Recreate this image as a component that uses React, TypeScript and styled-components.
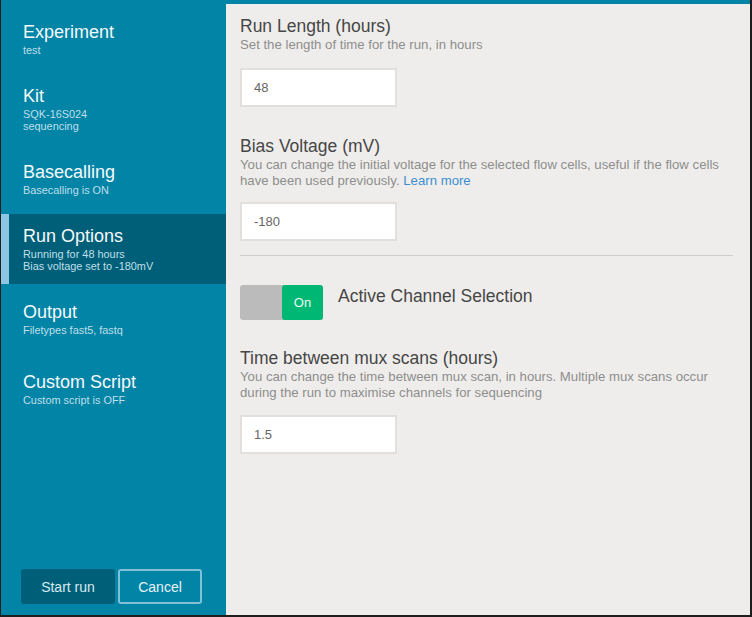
import React from "react";
import styled, { createGlobalStyle } from "styled-components";

const Global = createGlobalStyle`
  html, body { margin: 0; padding: 0; background: #1e1e1e; }
  body { font-family: "Liberation Sans", Arial, sans-serif; }
  * { box-sizing: border-box; }
`;

const Frame = styled.div`
  width: 752px;
  height: 617px;
  padding: 0 2px 2px 1px;
  background: #1e1e1e;
`;

const Shell = styled.div`
  display: grid;
  grid-template-columns: 225px 1fr;
  height: 100%;
  background: #0284a6;
`;

const Sidebar = styled.nav`
  display: flex;
  flex-direction: column;
  padding: 10px 0 11px 0;
  background: #0284a6;
`;

const NavList = styled.div`
  display: flex;
  flex-direction: column;
  gap: 6px;
  flex: 1;
`;

const NavItem = styled.div<{ $active?: boolean; $offset?: number }>`
  margin-top: ${(p) => p.$offset ?? 0}px;
  padding: 11px 8px 12px ${(p) => (p.$active ? "14px" : "22px")};
  background: ${(p) => (p.$active ? "#005f78" : "transparent")};
  border-left: ${(p) => (p.$active ? "8px solid #8cc6e4" : "none")};
  color: #f2f8fa;
`;

const NavTitle = styled.div`
  font-size: 18px;
  line-height: 23px;
  color: #f4f9fb;
`;

const NavSub = styled.div`
  font-size: 10.9px;
  line-height: 12px;
  color: #bfdfe9;
`;

const ButtonRow = styled.div`
  display: flex;
  gap: 3px;
  padding-left: 20px;
`;

const StartButton = styled.button`
  width: 94px;
  height: 35px;
  border: none;
  border-radius: 3px;
  background: #005f78;
  color: #d6eaf0;
  font-family: "Liberation Sans", Arial, sans-serif;
  font-size: 14px;
`;

const CancelButton = styled.button`
  width: 84px;
  height: 35px;
  border: 2px solid #80c1d6;
  border-radius: 3px;
  background: transparent;
  color: #e4f2f6;
  font-family: "Liberation Sans", Arial, sans-serif;
  font-size: 14px;
`;

const Content = styled.main`
  margin-top: 4px;
  background: #efedeb;
  padding: 12px 17px 0 14px;
  display: flex;
  flex-direction: column;
`;

const Section = styled.section<{ $gap?: number }>`
  display: flex;
  flex-direction: column;
  margin-bottom: ${(p) => p.$gap ?? 0}px;
`;

const Title = styled.div`
  font-size: 17.5px;
  line-height: 21px;
  color: #464646;
`;

const Desc = styled.div`
  font-size: 13.2px;
  line-height: 16.5px;
  color: #8d8d8d;
`;

const Link = styled.a`
  color: #3b8fd1;
  text-decoration: none;
`;

const Input = styled.input<{ $top?: number }>`
  margin-top: ${(p) => p.$top ?? 14}px;
  width: 157px;
  height: 39px;
  border: 2px solid #e2dfdc;
  background: #ffffff;
  padding: 0 12px;
  font-family: "Liberation Sans", Arial, sans-serif;
  font-size: 13px;
  color: #666666;
  outline: none;
`;

const Divider = styled.hr`
  margin: 14px 0 0 0;
  border: none;
  border-top: 1px solid #cfcdcb;
  height: 0;
`;

const ToggleRow = styled.div`
  display: flex;
  align-items: flex-start;
  gap: 15px;
  margin-top: 29px;
  margin-bottom: 28px;
`;

const Toggle = styled.div`
  display: flex;
  width: 83px;
  height: 35px;
  border-radius: 3px;
  background: #bbbbbb;
  justify-content: flex-end;
`;

const Knob = styled.div`
  width: 41px;
  height: 35px;
  border-radius: 3px;
  background: #00b874;
  color: #e9fbf3;
  font-size: 13px;
  display: flex;
  align-items: center;
  justify-content: center;
`;

const ToggleLabel = styled.div`
  font-size: 17.5px;
  line-height: 21px;
  margin-top: 1px;
  color: #464646;
`;

const navItems = [
  { title: "Experiment", subs: ["test"] },
  { title: "Kit", subs: ["SQK-16S024", "sequencing"] },
  { title: "Basecalling", subs: ["Basecalling is ON"] },
  { title: "Run Options", subs: ["Running for 48 hours", "Bias voltage set to -180mV"], active: true },
  { title: "Output", subs: ["Filetypes fast5, fastq"] },
  { title: "Custom Script", subs: ["Custom script is OFF"], offset: 6 },
];

export default function App() {
  return (
    <Frame>
      <Global />
      <Shell>
        <Sidebar>
          <NavList>
            {navItems.map((n) => (
              <NavItem key={n.title} $active={n.active} $offset={n.offset}>
                <NavTitle>{n.title}</NavTitle>
                {n.subs.map((s) => (
                  <NavSub key={s}>{s}</NavSub>
                ))}
              </NavItem>
            ))}
          </NavList>
          <ButtonRow>
            <StartButton>Start run</StartButton>
            <CancelButton>Cancel</CancelButton>
          </ButtonRow>
        </Sidebar>
        <Content>
          <Section $gap={29}>
            <Title>Run Length (hours)</Title>
            <Desc>Set the length of time for the run, in hours</Desc>
            <Input defaultValue="48" />
          </Section>
          <Section>
            <Title>Bias Voltage (mV)</Title>
            <Desc>
              You can change the initial voltage for the selected flow cells, useful if the flow cells
              have been used previously. <Link href="#">Learn more</Link>
            </Desc>
            <Input defaultValue="-180" $top={12} />
          </Section>
          <Divider />
          <ToggleRow>
            <Toggle>
              <Knob>On</Knob>
            </Toggle>
            <ToggleLabel>Active Channel Selection</ToggleLabel>
          </ToggleRow>
          <Section>
            <Title>Time between mux scans (hours)</Title>
            <Desc>
              You can change the time between mux scan, in hours. Multiple mux scans occur during the
              run to maximise channels for sequencing
            </Desc>
            <Input defaultValue="1.5" $top={13} />
          </Section>
        </Content>
      </Shell>
    </Frame>
  );
}
